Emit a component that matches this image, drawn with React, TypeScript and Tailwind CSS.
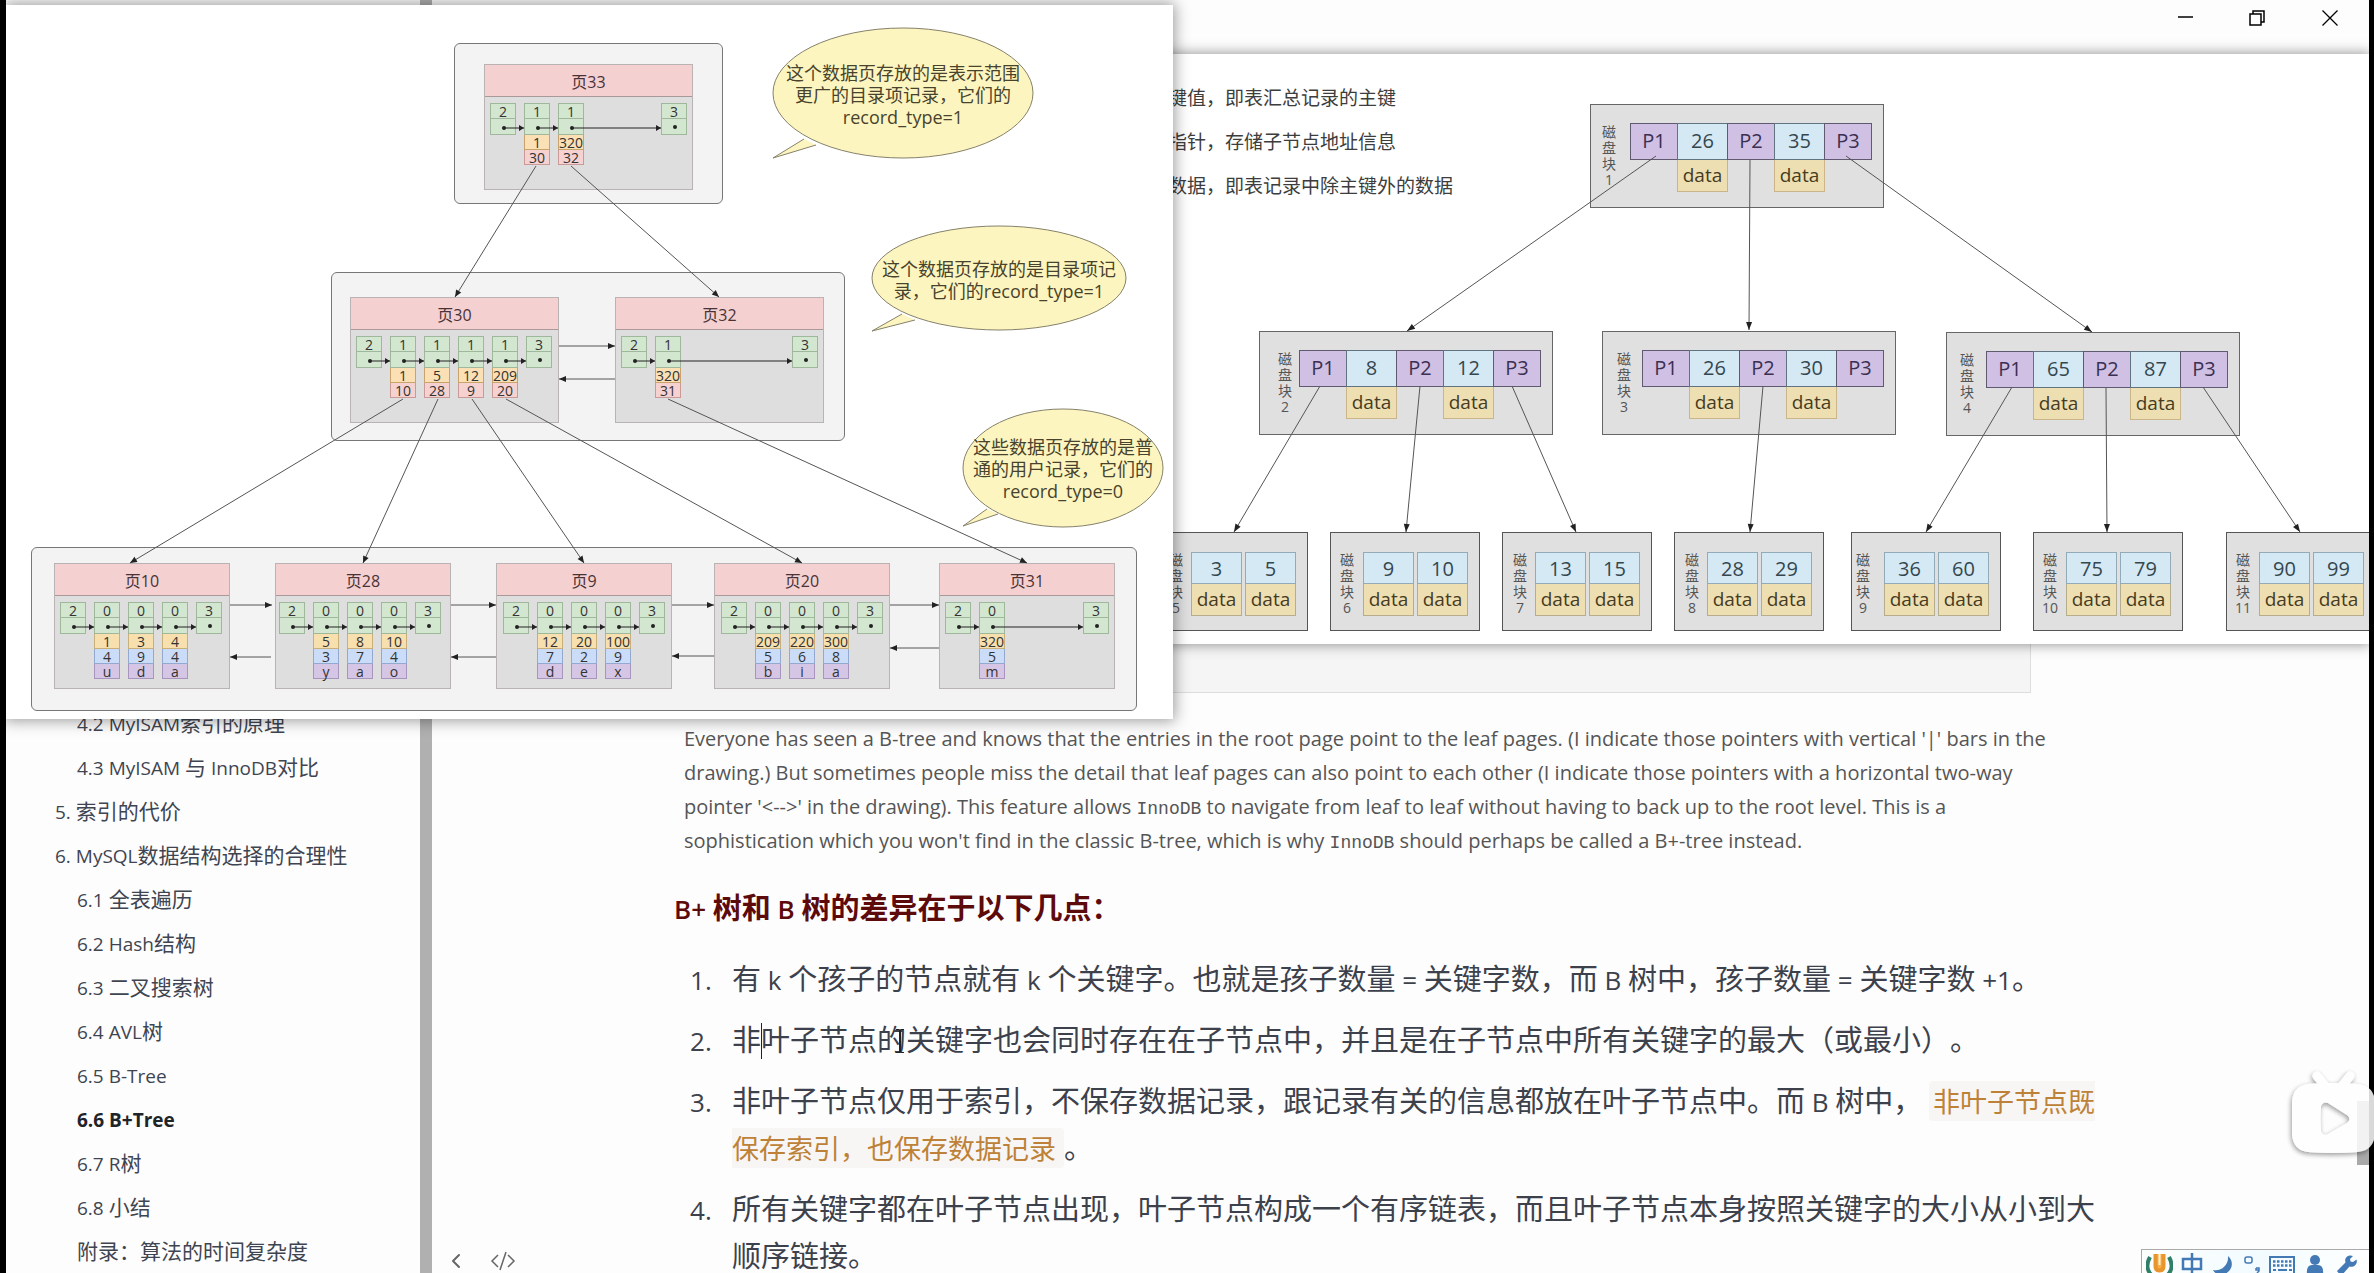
import React from "react";
import { ChevronLeft } from "lucide-react";

type Line = [number, number, number, number];

const CJK = /([\u3000-\u303f\u4e00-\u9fff\uff00-\uffef]+)/;

/** Text in which Chinese runs are set slightly larger than Latin ones. */
function Mixed({ text, cjk }: { text: string; cjk: string }) {
  return (
    <>
      {text.split(CJK).map((run, i) =>
        CJK.test(run) ? (
          <span key={i} className={cjk}>
            {run}
          </span>
        ) : (
          <React.Fragment key={i}>{run}</React.Fragment>
        ),
      )}
    </>
  );
}

function Arrow({ line, size = 7, color = "#555" }: { line: Line; size?: number; color?: string }) {
  const [x1, y1, x2, y2] = line;
  const a = Math.atan2(y2 - y1, x2 - x1);
  const p = (d: number, s: number) =>
    `${x2 - size * Math.cos(a) * d - s * Math.sin(a)},${y2 - size * Math.sin(a) * d + s * Math.cos(a)}`;
  return (
    <g>
      <line x1={x1} y1={y1} x2={x2} y2={y2} stroke={color} strokeWidth="1" />
      <polygon points={`${x2},${y2} ${p(1, 3)} ${p(1, -3)}`} fill="#222" />
    </g>
  );
}

/* ---------- B+ tree of data pages ---------- */

const PX = 6;
const PY = 5;

type PageData = {
  name: string;
  x: number;
  y: number;
  w: number;
  pad: number;
  sparse?: boolean;
  records: string[][];
};

const indexPages: PageData[] = [
  { name: "页33", x: 484, y: 64, w: 209, pad: 6, sparse: true, records: [["2"], ["1", "1", "30"], ["1", "320", "32"], ["3"]] },
  { name: "页30", x: 350, y: 297, w: 209, pad: 6, records: [["2"], ["1", "1", "10"], ["1", "5", "28"], ["1", "12", "9"], ["1", "209", "20"], ["3"]] },
  { name: "页32", x: 615, y: 297, w: 209, pad: 6, sparse: true, records: [["2"], ["1", "320", "31"], ["3"]] },
];

const leafPages: PageData[] = [
  { name: "页10", x: 54, y: 563, w: 176, pad: 6, records: [["2"], ["0", "1", "4", "u"], ["0", "3", "9", "d"], ["0", "4", "4", "a"], ["3"]] },
  { name: "页28", x: 275, y: 563, w: 176, pad: 4, records: [["2"], ["0", "5", "3", "y"], ["0", "8", "7", "a"], ["0", "10", "4", "o"], ["3"]] },
  { name: "页9", x: 496, y: 563, w: 176, pad: 7, records: [["2"], ["0", "12", "7", "d"], ["0", "20", "2", "e"], ["0", "100", "9", "x"], ["3"]] },
  { name: "页20", x: 714, y: 563, w: 176, pad: 7, records: [["2"], ["0", "209", "5", "b"], ["0", "220", "6", "i"], ["0", "300", "8", "a"], ["3"]] },
  { name: "页31", x: 939, y: 563, w: 176, pad: 6, sparse: true, records: [["2"], ["0", "320", "5", "m"], ["3"]] },
];

const pageEdges: Line[] = [
  [536, 166, 455, 297],
  [571, 166, 719, 297],
  [403, 399, 130, 563],
  [438, 399, 363, 563],
  [472, 399, 584, 563],
  [506, 399, 802, 563],
  [668, 399, 1027, 563],
  [559, 346, 615, 346],
  [615, 379, 559, 379],
  [230, 605, 272, 605],
  [271, 657, 230, 657],
  [451, 605, 496, 605],
  [496, 657, 451, 657],
  [672, 605, 714, 605],
  [714, 656, 672, 656],
  [890, 605, 939, 605],
  [939, 648, 890, 648],
];

const groups = [
  { x: 454, y: 43, w: 269, h: 161 },
  { x: 331, y: 272, w: 514, h: 169 },
  { x: 31, y: 547, w: 1106, h: 164 },
];

const tints = {
  index: ["bg-[#fae0b4] border-[#c9a46a]", "bg-[#f5d2d0] border-[#c99a98]"],
  leaf: ["bg-[#f7dfae] border-[#c9b07a]", "bg-[#cbdcf8] border-[#93a9d0]", "bg-[#d6c6e6] border-[#a795bd]"],
};

function recordX(p: PageData, i: number) {
  if (p.sparse && i === p.records.length - 1) return p.x + p.w - 6 - 26;
  return p.x + p.pad + i * 34;
}

function Page({ page, kind }: { page: PageData; kind: "index" | "leaf" }) {
  return (
    <div
      className="absolute h-[126px] border border-[#b9b3b3] bg-[#dedede]"
      style={{ left: page.x - PX, top: page.y - PY, width: page.w }}
    >
      <div className="h-8 border-b border-[#a99] bg-[#f4d0d1] text-center text-base leading-[34px] text-[#4a3336]">
        {page.name}
      </div>
      <div className="flex items-start gap-2 pt-[6px] text-sm leading-[16px] text-[#333]" style={{ paddingLeft: page.pad - 1 }}>
        {page.records.map((r, i) => (
          <div
            key={i}
            className={page.sparse && i === page.records.length - 1 ? "ml-auto mr-[5px] w-[26px]" : "w-[26px]"}
          >
            <div className="h-4 border border-[#9fb89b] bg-[#d3e6cf] text-center">{r[0]}</div>
            <div className="h-4 border-x border-b border-[#9fb89b] bg-[#d3e6cf]" />
            {r.slice(1).map((v, k) => (
              <div key={k} className={`flex h-[15px] justify-center border-x border-b ${tints[kind][k]}`}>
                {v}
              </div>
            ))}
          </div>
        ))}
      </div>
    </div>
  );
}

const bubbles = [
  { cx: 903, cy: 93, rx: 130, ry: 65, tail: "M804 139 L773 158 L816 145", lines: ["这个数据页存放的是表示范围", "更广的目录项记录，它们的", "record_type=1"], w: 262, top: 62 },
  { cx: 999, cy: 278, rx: 127, ry: 52, tail: "M902 314 L872 331 L915 320", lines: ["这个数据页存放的是目录项记", "录，它们的record_type=1"], w: 254, top: 258 },
  { cx: 1063, cy: 468, rx: 100, ry: 59, tail: "M987 509 L963 526 L998 514", lines: ["这些数据页存放的是普", "通的用户记录，它们的", "record_type=0"], w: 200, top: 436 },
];

function PageTreeWindow() {
  const all = [...indexPages, ...leafPages];
  return (
    <section
      aria-label="B+Tree"
      className="absolute left-0 top-[5px] h-[714px] w-[1167px] bg-white shadow-[0_0_14px_2px_rgba(0,0,0,0.38)]"
    >
      {groups.map((g, i) => (
        <div
          key={i}
          className="absolute rounded-md border border-[#777] bg-[#f3f3f3]"
          style={{ left: g.x - PX, top: g.y - PY, width: g.w, height: g.h }}
        />
      ))}
      {indexPages.map((p) => (
        <Page key={p.name} page={p} kind="index" />
      ))}
      {leafPages.map((p) => (
        <Page key={p.name} page={p} kind="leaf" />
      ))}
      <svg className="absolute inset-0" width="1167" height="714" viewBox="6 5 1167 714">
        {bubbles.map((b, i) => (
          <g key={i}>
            <ellipse cx={b.cx} cy={b.cy} rx={b.rx} ry={b.ry} fill="#fdf5bf" stroke="#85816a" />
            <path d={b.tail} fill="#fdf5bf" stroke="#85816a" />
          </g>
        ))}
        {pageEdges.map((l, i) => (
          <Arrow key={i} line={l} />
        ))}
        {all.map((p) =>
          p.records.map((r, i) => {
            const x = recordX(p, i) + 14;
            const y = p.y + 64;
            const last = i === p.records.length - 1;
            return (
              <g key={p.name + i}>
                <circle cx={x} cy={last ? y - 1 : y} r="2" fill="#222" />
                {!last && <Arrow line={[x, y, recordX(p, i + 1), y]} size={5} color="#222" />}
              </g>
            );
          }),
        )}
      </svg>
      {bubbles.map((b, i) => (
        <p
          key={i}
          className="absolute whitespace-nowrap text-center text-lg leading-[22px] text-[#48432c]"
          style={{ left: b.cx - b.w / 2 - PX, top: b.top - PY, width: b.w }}
        >
          {b.lines.map((l) => (
            <span key={l} className="flex justify-center">
              {l}
            </span>
          ))}
        </p>
      ))}
    </section>
  );
}

/* ---------- B tree of disk blocks ---------- */

const BX = 1006;
const BY = 53;

const blocks = [
  { n: "1", x: 1590, y: 103, lx: 19, keys: ["26", "35"] },
  { n: "2", x: 1259, y: 330, lx: 26, keys: ["8", "12"] },
  { n: "3", x: 1602, y: 330, lx: 22, keys: ["26", "30"] },
  { n: "4", x: 1946, y: 331, lx: 21, keys: ["65", "87"] },
];

const leafBlocks = [
  { n: "5", x: 1158, lx: 18, keys: ["3", "5"] },
  { n: "6", x: 1330, lx: 17, keys: ["9", "10"] },
  { n: "7", x: 1502, lx: 18, keys: ["13", "15"] },
  { n: "8", x: 1674, lx: 18, keys: ["28", "29"] },
  { n: "9", x: 1851, lx: 12, keys: ["36", "60"] },
  { n: "10", x: 2033, lx: 17, keys: ["75", "79"] },
  { n: "11", x: 2226, lx: 17, keys: ["90", "99"] },
];

const blockEdges: Line[] = [
  [1656, 155, 1407, 330],
  [1750, 159, 1749, 329],
  [1846, 155, 2092, 331],
  [1320, 385, 1234, 531],
  [1420, 385, 1406, 531],
  [1512, 385, 1576, 531],
  [1763, 385, 1750, 531],
  [2012, 386, 1926, 531],
  [2106, 387, 2107, 531],
  [2203, 386, 2300, 531],
];

function BlockLabel({ n, lx }: { n: string; lx: number }) {
  return (
    <div
      className="absolute top-[19px] flex w-5 flex-col items-center text-sm leading-4 text-[#555]"
      style={{ left: lx - 11 }}
    >
      <span>磁</span>
      <span>盘</span>
      <span>块</span>
      <span>{n}</span>
    </div>
  );
}

function Block({ b }: { b: (typeof blocks)[number] }) {
  return (
    <div
      className="absolute h-[104px] w-[294px] border border-[#666] bg-[#e0e0e0] pl-[39px] pt-[18px]"
      style={{ left: b.x - BX, top: b.y - BY }}
    >
      <BlockLabel n={b.n} lx={b.lx} />
      <div className="flex items-start text-xl leading-[34px]">
        {["P1", b.keys[0], "P2", b.keys[1], "P3"].map((c, i) =>
          i % 2 === 0 ? (
            <div key={i} className="-mr-px h-[37px] w-12 border border-[#5f5a70] bg-[#cfc0e4] text-center text-[#3b2f52]">
              {c}
            </div>
          ) : (
            <div key={i} className="-mr-px w-[51px] text-center">
              <div className="h-[37px] border border-[#5f7480] bg-[#d5e9f5] text-[#34474f]">{c}</div>
              <div className="h-8 border border-t-0 border-[#c9b588] bg-[#eedfb2] text-[19px] leading-[31px] text-[#453c22]">
                data
              </div>
            </div>
          ),
        )}
      </div>
    </div>
  );
}

function LeafBlock({ b }: { b: (typeof leafBlocks)[number] }) {
  return (
    <div
      className="absolute h-[99px] w-[150px] border border-[#555] bg-[#e0e0e0] pl-8 pt-[19px]"
      style={{ left: b.x - BX, top: 531 - BY }}
    >
      <BlockLabel n={b.n} lx={b.lx} />
      <div className="flex gap-[3px] text-center text-xl leading-[31px]">
        {b.keys.map((k) => (
          <div key={k} className="w-[51px]">
            <div className="h-8 border border-[#93aab8] bg-[#d5e9f5] text-[#34474f]">{k}</div>
            <div className="h-8 border border-t-0 border-[#b5ad8c] bg-[#eedfb2] text-[19px] text-[#453c22]">data</div>
          </div>
        ))}
      </div>
    </div>
  );
}

function BlockTreeWindow() {
  return (
    <section
      aria-label="B-Tree"
      className="absolute left-[1000px] right-0 top-[54px] h-[590px] bg-white shadow-[0_0_12px_1px_rgba(0,0,0,0.4)]"
    >
      <div className="relative h-full overflow-hidden">
        <ul className="ml-[162px] pt-[22px] text-[19px] leading-[44px] text-[#3d3d3d]">
          <li>键值，即表汇总记录的主键</li>
          <li>指针，存储子节点地址信息</li>
          <li>数据，即表记录中除主键外的数据</li>
        </ul>
        {blocks.map((b) => (
          <Block key={b.n} b={b} />
        ))}
        {leafBlocks.map((b) => (
          <LeafBlock key={b.n} b={b} />
        ))}
        <svg className="absolute left-0 top-0" width="1363" height="591" viewBox="1006 53 1363 591">
          {blockEdges.map((l, i) => (
            <Arrow key={i} line={l} size={8} />
          ))}
        </svg>
      </div>
    </section>
  );
}

/* ---------- Document ---------- */

const outline = [
  { t: "4.2 MyISAM索引的原理", l: 2 },
  { t: "4.3 MyISAM 与 InnoDB对比", l: 2 },
  { t: "5. 索引的代价", l: 1 },
  { t: "6. MySQL数据结构选择的合理性", l: 1 },
  { t: "6.1 全表遍历", l: 2 },
  { t: "6.2 Hash结构", l: 2 },
  { t: "6.3 二叉搜索树", l: 2 },
  { t: "6.4 AVL树", l: 2 },
  { t: "6.5 B-Tree", l: 2 },
  { t: "6.6 B+Tree", l: 2, current: true },
  { t: "6.7 R树", l: 2 },
  { t: "6.8 小结", l: 2 },
  { t: "附录：算法的时间复杂度", l: 2 },
];

function Outline() {
  return (
    <nav className="w-[414px] shrink-0 pt-[702px]">
      <ul>
        {outline.map((o) => (
          <li key={o.t} className={o.l === 1 ? "h-11 pl-[49px]" : "h-11 pl-[71px]"}>
            <a
              href="#"
              className={
                o.current
                  ? "block whitespace-nowrap text-[19px] font-bold leading-[44px] text-[#1f2428]"
                  : "block whitespace-nowrap text-[19px] leading-[44px] text-[#3f4550]"
              }
            >
              <Mixed text={o.t} cjk="text-[21px] leading-none" />
            </a>
          </li>
        ))}
      </ul>
    </nav>
  );
}

function Item({ n, children }: { n: number; children: React.ReactNode }) {
  return (
    <li className="flex">
      <span className="w-[42px] shrink-0">{n}.</span>
      <p className="whitespace-nowrap">{children}</p>
    </li>
  );
}

function Article() {
  return (
    <main className="relative flex-1">
      <div className="ml-[243px] mt-20 h-[613px] w-[1356px] border border-[#dedede] bg-[#f5f5f5]" />
      <p className="ml-[252px] pt-[29px] text-xl leading-[34px] text-[#555]">
        Everyone has seen a B-tree and knows that the entries in the root page point to the leaf pages. (I indicate
        those pointers with vertical '|' bars in the
        <br />
        drawing.) But sometimes people miss the detail that leaf pages can also point to each other (I indicate those
        pointers with a horizontal two-way
        <br />
        pointer '&lt;--&gt;' in the drawing). This feature allows{" "}
        <code className="font-['Liberation_Mono',monospace] text-lg leading-none">InnoDB</code> to navigate from leaf
        to leaf without having to back up to the root level. This is a
        <br />
        sophistication which you won't find in the classic B-tree, which is why{" "}
        <code className="font-['Liberation_Mono',monospace] text-lg leading-none">InnoDB</code> should perhaps be
        called a B+-tree instead.
      </p>
      <h4 className="ml-[242px] mt-7 text-[26px] font-semibold leading-[47px] text-[#5c0a0a]">
        <Mixed text="B+ 树和 B 树的差异在于以下几点：" cjk="text-[29px] font-bold leading-none" />
      </h4>
      <ol className="ml-[258px] mt-6 flex flex-col gap-[14px] text-[26px] leading-[47px] text-[#3c414b] [text-spacing-trim:space-all]">
        <Item n={1}>
          <Mixed
            text="有 k 个孩子的节点就有 k 个关键字。也就是孩子数量 = 关键字数，而 B 树中，孩子数量 = 关键字数 +1。"
            cjk="text-[29px] leading-none"
          />
        </Item>
        <Item n={2}>
          <span className="relative">
            <Mixed
              text="非叶子节点的关键字也会同时存在在子节点中，并且是在子节点中所有关键字的最大（或最小）。"
              cjk="text-[29px] leading-none"
            />
            <span className="absolute left-[29px] top-0 h-9 w-px bg-[#222]" />
            <svg className="absolute left-[164px] top-[6px]" width="8" height="24" viewBox="0 0 8 24" fill="none" stroke="#222">
              <path d="M0 .5H3.5V23.500H0M8 .5H4.500V23.500H8" />
            </svg>
          </span>
        </Item>
        <Item n={3}>
          <Mixed
            text="非叶子节点仅用于索引，不保存数据记录，跟记录有关的信息都放在叶子节点中。而 B 树中，"
            cjk="text-[29px] leading-none"
          />{" "}
          <code className="rounded bg-[#f8f6f5] pb-px pl-1 pr-2 font-['Noto_Sans_CJK_SC',sans-serif] text-[27px] font-normal leading-none text-[#bd8238]">
            非叶子节点既
            <br />
            保存索引，也保存数据记录
          </code>
          <span className="text-[29px] leading-none">。</span>
        </Item>
        <Item n={4}>
          <Mixed
            text="所有关键字都在叶子节点出现，叶子节点构成一个有序链表，而且叶子节点本身按照关键字的大小从小到大"
            cjk="text-[29px] leading-none"
          />
          <br />
          <Mixed text="顺序链接。" cjk="text-[29px] leading-none" />
        </Item>
      </ol>
      <div className="absolute bottom-0 left-3 flex gap-[22px] text-[#666]">
        <button aria-label="back">
          <ChevronLeft size={24} strokeWidth={2} />
        </button>
        <button aria-label="source">
          <svg width="26" height="24" viewBox="0 0 26 24" fill="none" stroke="currentColor" strokeWidth="1.500">
            <path d="M8 6L2 12L8 18M18 6L24 12L18 18M16 3L10 21" />
          </svg>
        </button>
      </div>
    </main>
  );
}

function WindowControls() {
  return (
    <header className="absolute right-0 top-0 flex h-9 items-center text-black">
      <button aria-label="minimize" className="flex w-[77px] justify-center">
        <svg width="16" height="16" viewBox="0 0 16 16" stroke="currentColor" strokeWidth="1.500">
          <path d="M0 7H15" />
        </svg>
      </button>
      <button aria-label="restore" className="flex w-[66px] justify-center">
        <svg width="16" height="16" viewBox="0 0 16 16" fill="none" stroke="currentColor" strokeWidth="1.500">
          <path d="M1 4H12V15H1ZM4 4V1H15V12H12" />
        </svg>
      </button>
      <button aria-label="close" className="flex w-[79px] justify-center">
        <svg width="16" height="16" viewBox="0 0 16 16" stroke="currentColor" strokeWidth="1.300">
          <path d="M.5 .5L15.500 15.500M15.500 .5L.5 15.500" />
        </svg>
      </button>
    </header>
  );
}

function InputBar() {
  return (
    <div className="absolute bottom-0 right-[5px] flex h-6 w-[228px] items-start gap-2 overflow-hidden border-l border-t border-[#aaa] bg-gradient-to-r from-[#fdfefe] via-[#f2fbff] to-white pl-1 pt-[3px] text-[#4379b5]">
      <svg className="shrink-0" width="27" height="27" viewBox="0 0 27 27" fill="none">
        <path d="M4 4C-1 13 2 20 8 24M23 4C28 13 25 20 19 24" stroke="#2f8067" strokeWidth="4" />
        <path d="M9.500 1V13Q9.500 17.500 13.500 17.500T17.500 13V1" fill="#f6b04a" stroke="#e8952c" strokeWidth="4" />
        <path d="M13.500 1V12" stroke="#fff3d6" strokeWidth="2" />
      </svg>
      <svg className="shrink-0" width="22" height="26" viewBox="0 0 22 26" fill="none" stroke="currentColor" strokeWidth="2.500">
        <path d="M2 6H20V16H2ZM11 0V25" />
      </svg>
      <svg className="shrink-0" width="24" height="24" viewBox="0 0 24 24" fill="#4379b5">
        <path d="M17 3C23 8 22 17 14 21C9 23 4 21 2 17C10 19 18 12 17 3Z" />
      </svg>
      <svg className="shrink-0" width="18" height="24" viewBox="0 0 18 24" fill="none" stroke="currentColor" strokeWidth="1.500">
        <rect x="2" y="4" width="7" height="6" rx="2" />
        <path d="M13 15H16V18L14 20M13 15V17H16" />
      </svg>
      <svg className="shrink-0" width="26" height="22" viewBox="0 0 26 22" fill="none" stroke="currentColor">
        <rect x="1" y="4" width="24" height="17" strokeWidth="2" />
        <path d="M4 8.500H23M4 12.500H23" strokeWidth="2.500" strokeDasharray="2.500 1.500" />
        <path d="M4 17H7M9 17H18M20 17H23" strokeWidth="2" />
      </svg>
      <svg className="shrink-0" width="24" height="24" viewBox="0 0 24 24" fill="currentColor">
        <circle cx="12" cy="7" r="5" />
        <path d="M4 22Q3 12 9 12H15Q21 12 20 22Z" />
      </svg>
      <svg className="shrink-0" width="24" height="24" viewBox="0 0 24 24" fill="currentColor">
        <path d="M21.500 6.500L18 9L15.500 8.500L15 6L18 3C13 1 9 5 10.500 9.500L2 18L5 22L7 22L14.500 13.500C19 14.500 23 11 21.500 6.500Z" />
      </svg>
    </div>
  );
}

function PlayerBadge() {
  return (
    <button aria-label="play" className="absolute -right-[11px] top-[1062px]">
      <svg width="110" height="106" viewBox="2275 1062 110 106">
        <defs>
          <filter id="badge" x="-20%" y="-20%" width="140%" height="140%">
            <feDropShadow dx="-1" dy="2" stdDeviation="2.500" floodColor="#000" floodOpacity="0.450" />
          </filter>
        </defs>
        <g filter="url(#badge)" opacity="0.850">
          <path d="M2317 1076L2325 1086M2350 1076L2342 1086" stroke="#fff" strokeWidth="9" strokeLinecap="round" />
          <path
            fillRule="evenodd"
            fill="#fff"
            d="M2308 1084Q2333 1082 2358 1084Q2374 1086 2375 1102V1134Q2374 1150 2358 1152Q2333 1154 2308 1152Q2293 1150 2292 1134V1102Q2293 1086 2308 1084ZM2328 1103Q2323 1101 2321 1106Q2320 1118 2321 1131Q2323 1137 2328 1134L2347 1123Q2352 1119 2347 1115Z"
          />
        </g>
      </svg>
    </button>
  );
}

export default function App() {
  return (
    <div className="relative h-screen overflow-hidden bg-black pl-[6px] pr-[5px] font-['Open_Sans','Noto_Sans_CJK_SC',sans-serif]">
      <div className="relative flex h-full overflow-hidden bg-[#fdfdfe]">
        <Outline />
        <div className="w-3 shrink-0 bg-[#b0b0b0]" />
        <Article />
        <WindowControls />
        <BlockTreeWindow />
        <PageTreeWindow />
        <div className="absolute right-0 top-[1101px] h-16 w-3 bg-[#a9a9a9]" />
      </div>
      <InputBar />
      <PlayerBadge />
    </div>
  );
}
